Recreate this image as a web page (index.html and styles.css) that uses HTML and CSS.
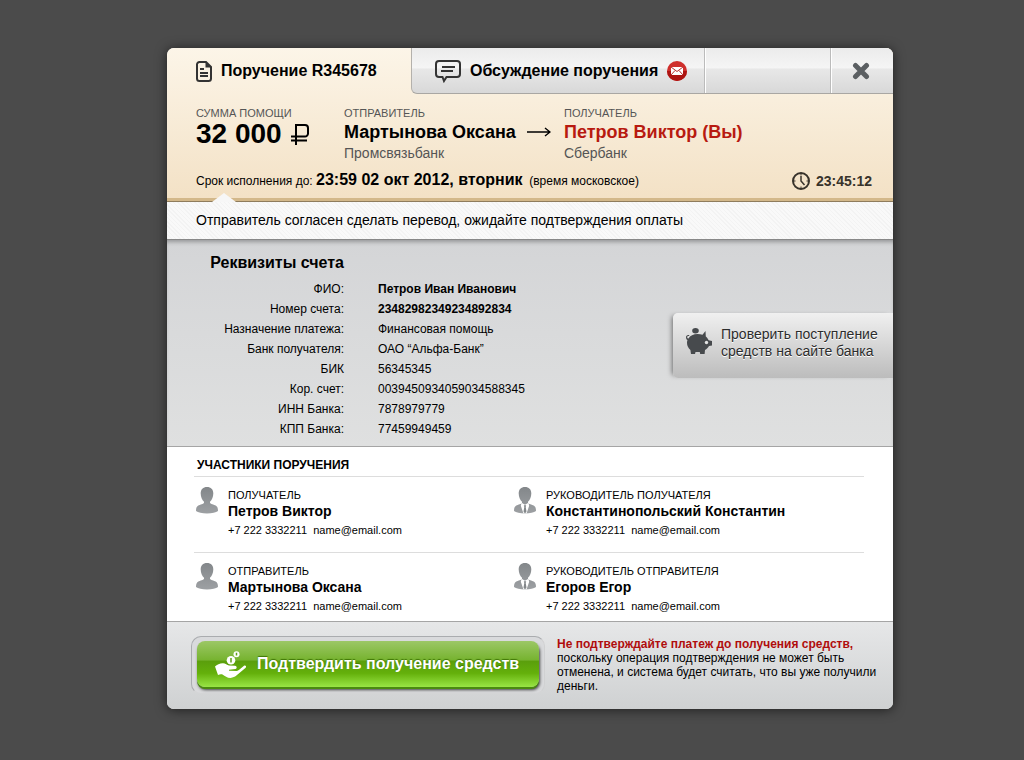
FILE: index.html
```
<!DOCTYPE html>
<html lang="ru">
<head>
    <meta charset="utf-8">
    <title>Поручение R345678</title>
    <link rel="stylesheet" href="styles.css">
</head>
<body>
    <!-- shared avatar shapes -->
    <svg class="sprite" width="0" height="0">
        <defs>
            <linearGradient id="grey" x1="0" y1="0" x2="0" y2="1">
                <stop offset="0" stop-color="#83878a"/>
                <stop offset="1" stop-color="#9da0a3"/>
            </linearGradient>
            <symbol id="person" viewBox="0 0 22 27">
                <path fill="url(#grey)" d="M11 0C7 0 4.600 2.500 4.700 6.500c.1 3.500 1.300 6.300 3.300 8.300v1c-.3 1.300-3.800 1.800-6 3C.6 19.900 0 21 0 24c2 1.600 6 2.500 11 2.500s9-.9 11-2.500c0-3-.6-4.100-2-5.200-2.200-1.200-5.700-1.700-6-3v-1c2-2 3.200-4.800 3.300-8.300C17.400 2.500 15 0 11 0z"/>
            </symbol>
            <symbol id="boss" viewBox="0 0 22 27">
                <use href="#person" width="22" height="27"/>
                <path fill="#fff" d="M7.600 15.800l3.400 2 3.400-2 .8 3-2.700 7.800h-3L6.800 18.800z"/>
                <path fill="#83878a" d="M9.800 18.200h2.400l-.5 1.800.8 4.500-1.500 2-1.500-2 .8-4.500z"/>
            </symbol>
        </defs>
    </svg>

    <div class="card">
        <div class="header">
            <div class="tabs">
                <button type="button" class="tab active">
                    <svg width="16" height="21" viewBox="0 0 16 21" fill="none" stroke="#333" stroke-width="2">
                        <path d="M3.500 1H10l5 5v11.500a2.500 2.500 0 0 1-2.500 2.500h-9A2.500 2.500 0 0 1 1 17.500v-14A2.500 2.500 0 0 1 3.500 1z"/>
                        <path d="M9.500 1v5.500H15z" fill="#333" stroke="none"/>
                        <path d="M4 8h4M4 12h8M4 15h8" stroke-width="2"/>
                    </svg>
                    Поручение R345678
                </button>
                <div class="tabs-rest">
                    <button type="button" class="tab discuss">
                        <svg width="26" height="25" viewBox="0 -2 26 25" fill="none" stroke="#333" stroke-width="2">
                            <path d="M4 1h18a3 3 0 0 1 3 3v10a3 3 0 0 1-3 3H11.500l-2.500 4-1.500-4H4a3 3 0 0 1-3-3V4a3 3 0 0 1 3-3z"/>
                            <path d="M7 7h13M6 11h12" stroke-width="2"/>
                        </svg>
                        Обсуждение поручения
                        <svg width="20" height="20" viewBox="0 0 20 20">
                            <circle cx="10" cy="10" r="10" fill="#cf2f2c"/>
                            <path d="M0 10a10 10 0 0 0 20 0z" fill="#ad1411"/>
                            <rect x="4" y="6" width="12" height="8" fill="#fff"/>
                            <path d="M4 6l6 4.500L16 6M4 14l4-4.500M16 14l-4-4.500" fill="none" stroke="#b8302d"/>
                        </svg>
                    </button>
                    <div class="tab-space"></div>
                    <button type="button" class="close" aria-label="Закрыть">
                        <svg width="18" height="18" viewBox="0 0 18 18">
                            <path d="M3.500 3.500l11 11M14.500 3.500l-11 11" stroke="#5b5f62" stroke-width="5" stroke-linecap="round"/>
                        </svg>
                    </button>
                </div>
            </div>

            <div class="summary">
                <div>
                    <div class="label">СУММА ПОМОЩИ</div>
                    <div class="sum">
                        32&nbsp;000
                        <svg width="18" height="21" viewBox="0 0 18 21" fill="none" stroke="#000" stroke-width="2">
                            <path d="M5 21V1h9a3 3 0 0 1 3 3v5.500a3 3 0 0 1-3 3H0M0 16.500h16"/>
                        </svg>
                    </div>
                </div>
                <div>
                    <div class="label">ОТПРАВИТЕЛЬ</div>
                    <div class="name">
                        Мартынова Оксана
                        <svg width="24" height="10" viewBox="0 0 24 10" fill="none" stroke="#000" stroke-width="1.400">
                            <path d="M0 5h23M18 1l5 4-5 4"/>
                        </svg>
                    </div>
                    <div class="bank">Промсвязьбанк</div>
                </div>
                <div>
                    <div class="label">ПОЛУЧАТЕЛЬ</div>
                    <div class="name you">Петров Виктор (Вы)</div>
                    <div class="bank">Сбербанк</div>
                </div>
            </div>

            <div class="deadline">
                <div>Срок исполнения до: <b>23:59 02 окт 2012, вторник</b>&nbsp; (время московское)</div>
                <div class="timer">
                    <svg width="18" height="18" viewBox="0 0 18 18" fill="none" stroke="#38332b">
                        <circle cx="9" cy="9" r="8" stroke-width="2"/>
                        <path d="M9 4v5l3.500 4" stroke-width="1.500"/>
                        <path d="M9 2v1.500M9 14.500V16M2 9h1.500M14.500 9H16"/>
                    </svg>
                    23:45:12
                </div>
            </div>
        </div>

        <div class="status">Отправитель согласен сделать перевод, ожидайте подтверждения оплаты</div>

        <div class="account">
            <div>
                <h2>Реквизиты счета</h2>
                <table>
                    <tr><th scope="row">ФИО:</th><td><b>Петров Иван Иванович</b></td></tr>
                    <tr><th scope="row">Номер счета:</th><td><b>23482982349234892834</b></td></tr>
                    <tr><th scope="row">Назначение платежа:</th><td>Финансовая помощь</td></tr>
                    <tr><th scope="row">Банк получателя:</th><td>ОАО “Альфа-Банк”</td></tr>
                    <tr><th scope="row">БИК</th><td>56345345</td></tr>
                    <tr><th scope="row">Кор. счет:</th><td>0039450934059034588345</td></tr>
                    <tr><th scope="row">ИНН Банка:</th><td>7878979779</td></tr>
                    <tr><th scope="row">КПП Банка:</th><td>77459949459</td></tr>
                </table>
            </div>
            <a href="#" class="check">
                <svg width="26" height="26" viewBox="0 0 26 26" fill="#474a4d">
                    <ellipse cx="9.500" cy="2.700" rx="3.300" ry="2.700"/>
                    <path d="M2.500 10.500C4 7.500 7.500 6 11.500 6c1.800 0 3.500.2 5 .7L19.500 3l.3 5.500c1.200.9 2.200 2.200 2.800 3.800l3.400.7v4.500l-3 .5c-1 1.800-2.300 3-4 3.900l-.4 4.100h-4.400l-.4-2H9.500L9 26H5l-.6-4C2.300 20.300 1 17.800 1 14.800c0-1 .2-1.900.5-2.700C.3 11.500-.3 9.800.2 8.300.6 7.300 2 6.600 3.300 7l-.2 1c-1-.2-1.800.2-1.900 1-.1.700.4 1.300 1.300 1.500z"/>
                    <circle cx="20.500" cy="14.500" r="1.700" fill="#e2e2e2"/>
                </svg>
                <span>Проверить поступление<br>средств на сайте банка</span>
            </a>
        </div>

        <div class="people">
            <h3>УЧАСТНИКИ ПОРУЧЕНИЯ</h3>
            <div class="row">
                <div class="person">
                    <svg width="22" height="27"><use href="#person"/></svg>
                    <div>
                        <div class="role">ПОЛУЧАТЕЛЬ</div>
                        <div class="fio">Петров Виктор</div>
                        <div class="contacts">+7 222 3332211&nbsp; <a href="mailto:name@email.com">name@email.com</a></div>
                    </div>
                </div>
                <div class="person">
                    <svg width="22" height="27"><use href="#boss"/></svg>
                    <div>
                        <div class="role">РУКОВОДИТЕЛЬ ПОЛУЧАТЕЛЯ</div>
                        <div class="fio">Константинопольский Константин</div>
                        <div class="contacts">+7 222 3332211&nbsp; <a href="mailto:name@email.com">name@email.com</a></div>
                    </div>
                </div>
            </div>
            <div class="row">
                <div class="person">
                    <svg width="22" height="27"><use href="#person"/></svg>
                    <div>
                        <div class="role">ОТПРАВИТЕЛЬ</div>
                        <div class="fio">Мартынова Оксана</div>
                        <div class="contacts">+7 222 3332211&nbsp; <a href="mailto:name@email.com">name@email.com</a></div>
                    </div>
                </div>
                <div class="person">
                    <svg width="22" height="27"><use href="#boss"/></svg>
                    <div>
                        <div class="role">РУКОВОДИТЕЛЬ ОТПРАВИТЕЛЯ</div>
                        <div class="fio">Егоров Егор</div>
                        <div class="contacts">+7 222 3332211&nbsp; <a href="mailto:name@email.com">name@email.com</a></div>
                    </div>
                </div>
            </div>
        </div>

        <div class="footer">
            <div class="groove">
                <button type="button" class="confirm">
                    <svg width="32" height="27" viewBox="0 0 32 27">
                        <path fill="#fff" d="M0 15.500c2-2 5-3.300 8-3.200 2.500.2 4 1.700 6 2.200l6 .3c2 .3 2.300 2.700.5 3.200l-6.500.7v1.100l7.500.2c1.500-.2 2.500-.8 3.300-1.700L29 14.800c1.500-.8 2.800.6 1.700 1.900L22 24c-2 1.700-4 2.600-6.500 3-3.500 0-5.500-2-8-3.500-1.500-.6-2.500-.3-4.500.5z"/>
                        <circle cx="16" cy="9.300" r="4.300" fill="#fff"/>
                        <circle cx="21.500" cy="3.200" r="3" fill="#fff"/>
                        <path d="M16 7v4.600M21.500 1.800v2.800" stroke="#5fa018" stroke-width="1.500"/>
                    </svg>
                    Подтвердить получение средств
                </button>
            </div>
            <p class="note"><b>Не подтверждайте платеж до получения средств,</b> поскольку операция подтверждения не может быть отменена, и система будет считать, что вы уже получили деньги.</p>
        </div>
    </div>
</body>
</html>
```
FILE: styles.css
```
* {
    margin: 0;
    padding: 0;
    box-sizing: border-box;
}

body {
    font-family: "Liberation Sans", Arial, sans-serif;
    font-size: 12px;
    color: #000;
    background-color: #4b4b4b;
    padding: 48px 131px 48px 167px;
}

button {
    font-family: inherit;
    font-size: 16px;
    font-weight: bold;
    border: none;
    background: none;
    cursor: pointer;
}

svg {
    flex: none;
}

.sprite {
    position: absolute;
}

.card {
    min-width: 726px;
    border-radius: 7px;
    background-color: #fff;
    box-shadow: 0 1px 12px rgba(0, 0, 0, 0.6);
    overflow: hidden;
}

/* Header */
.header {
    background: linear-gradient(#fcf5e8, #f3e1c5);
    border-bottom: 1px solid #8f7c5c;
    box-shadow: inset 0 -3px 0 #d3b88a;
    padding-bottom: 8px;
}

.tabs {
    display: flex;
    height: 46px;
}

.tab {
    display: flex;
    align-items: center;
    gap: 9px;
}

.tab.active {
    width: 244px;
    padding-left: 29px;
}

.tabs-rest {
    flex: 1;
    display: flex;
    background: linear-gradient(#ebebeb, #f5f5f5 45%, #e8e8e8 46%, #d8d8d8);
    border-left: 1px solid #b4b1ac;
    border-bottom: 1px solid #a9a7a3;
    border-bottom-left-radius: 6px;
}

.discuss {
    width: 293px;
    padding-left: 23px;
    border-right: 1px solid #bbb;
}

.tab-space {
    flex: 1;
    border-left: 1px solid #fff;
    border-right: 1px solid #bbb;
}

.close {
    display: flex;
    align-items: center;
    width: 62px;
    padding-left: 20px;
    border-left: 1px solid #fff;
}

.summary {
    display: grid;
    grid-template-columns: 148px 220px 1fr;
    padding: 12px 21px 0 29px;
}

.label {
    font-size: 11px;
    line-height: 14px;
    color: #555;
}

.sum {
    display: flex;
    align-items: center;
    gap: 9px;
    font-size: 28px;
    font-weight: bold;
    line-height: 28px;
}

.name {
    display: flex;
    align-items: center;
    gap: 11px;
    font-size: 18px;
    font-weight: bold;
    line-height: 24px;
}

.you {
    color: #b81a10;
}

.bank {
    font-size: 14px;
    line-height: 18px;
    color: #555;
}

.deadline {
    display: flex;
    justify-content: space-between;
    padding: 6px 21px 0 29px;
    line-height: 24px;
}

.deadline b {
    font-size: 16px;
}

.timer {
    display: flex;
    align-items: center;
    gap: 6px;
    font-size: 14px;
    font-weight: bold;
    color: #38332b;
}

/* Status line */
.status {
    position: relative;
    padding: 0 29px;
    font-size: 14px;
    line-height: 37px;
    background: repeating-linear-gradient(45deg, #f3f3f3 0, #f3f3f3 1px, #f9f9f9 1px, #f9f9f9 3px);
    border-bottom: 1px solid #888;
}

.status::before {
    content: "";
    position: absolute;
    left: 45px;
    top: -9px;
    border: 12px solid transparent;
    border-top: none;
    border-bottom: 9px solid #f7f7f7;
}

/* Account details */
.account {
    display: flex;
    justify-content: space-between;
    align-items: flex-start;
    padding: 13px 0 7px;
    background: linear-gradient(#d4d5d7, #dfe0e0);
    box-shadow: inset 0 4px 4px -2px rgba(0, 0, 0, 0.3);
    border-bottom: 1px solid #a5a5a5;
}

.account h2 {
    width: 177px;
    font-size: 16px;
    line-height: 20px;
    text-align: right;
    margin-bottom: 6px;
}

table {
    border-collapse: collapse;
}

th {
    width: 177px;
    font-weight: normal;
    text-align: right;
    line-height: 20px;
}

td {
    padding-left: 34px;
}

.check {
    display: flex;
    gap: 9px;
    margin-top: 60px;
    width: 220px;
    height: 65px;
    padding: 13px 0 0 13px;
    border-radius: 5px 0 0 5px;
    background: linear-gradient(#f0f0f0, #bcbcbc);
    box-shadow: -4px 0 5px -3px rgba(0, 0, 0, 0.5);
    color: #2c2c2c;
    font-size: 14px;
    line-height: 17px;
    text-decoration: none;
    text-shadow: 0 1px 0 #fff;
}

.check svg {
    margin-top: 2px;
}

/* Participants */
.people {
    padding: 8px 29px 0 27px;
}

.people h3 {
    font-size: 12px;
    line-height: 20px;
    padding-left: 3px;
    margin-bottom: 1px;
}

.row {
    display: grid;
    grid-template-columns: 318px 1fr;
    height: 76px;
    padding: 10px 0 0 2px;
    border-top: 1px solid #ddd;
}

.row:last-child {
    height: 69px;
}

.person {
    display: flex;
    gap: 10px;
}

.role {
    font-size: 11px;
    line-height: 16px;
}

.fio {
    font-size: 14px;
    font-weight: bold;
    line-height: 16px;
}

.contacts {
    font-size: 11px;
    line-height: 22px;
}

.contacts a {
    color: inherit;
    text-decoration: none;
}

/* Footer */
.footer {
    display: flex;
    align-items: flex-start;
    gap: 12px;
    padding: 14px 13px 15px 24px;
    background: linear-gradient(#e6e7e8, #cfd1d2);
    border-top: 1px solid #a5a5a5;
}

.groove {
    flex: none;
    padding: 4px 5px 6px;
    border: 1px solid;
    border-color: #aaacaf #d0d1d2 #d4d5d6 #aaacaf;
    border-radius: 10px;
    background-color: #d9dadc;
}

.confirm {
    display: flex;
    align-items: center;
    gap: 10px;
    width: 342px;
    height: 46px;
    padding-left: 18px;
    border-radius: 8px;
    color: #fff;
    background: linear-gradient(#9cc766, #76b32f 42%, #5a9e0c 43%, #64b00b 70%, #99e545);
    box-shadow: 0 2px 0 #4a8a10, 1px 3px 3px rgba(0, 0, 0, 0.7);
    text-shadow: 0 -1px 1px #3f7505;
}

.note {
    padding-top: 1px;
    line-height: 14px;
}

.note b {
    color: #b00d0d;
}
```
